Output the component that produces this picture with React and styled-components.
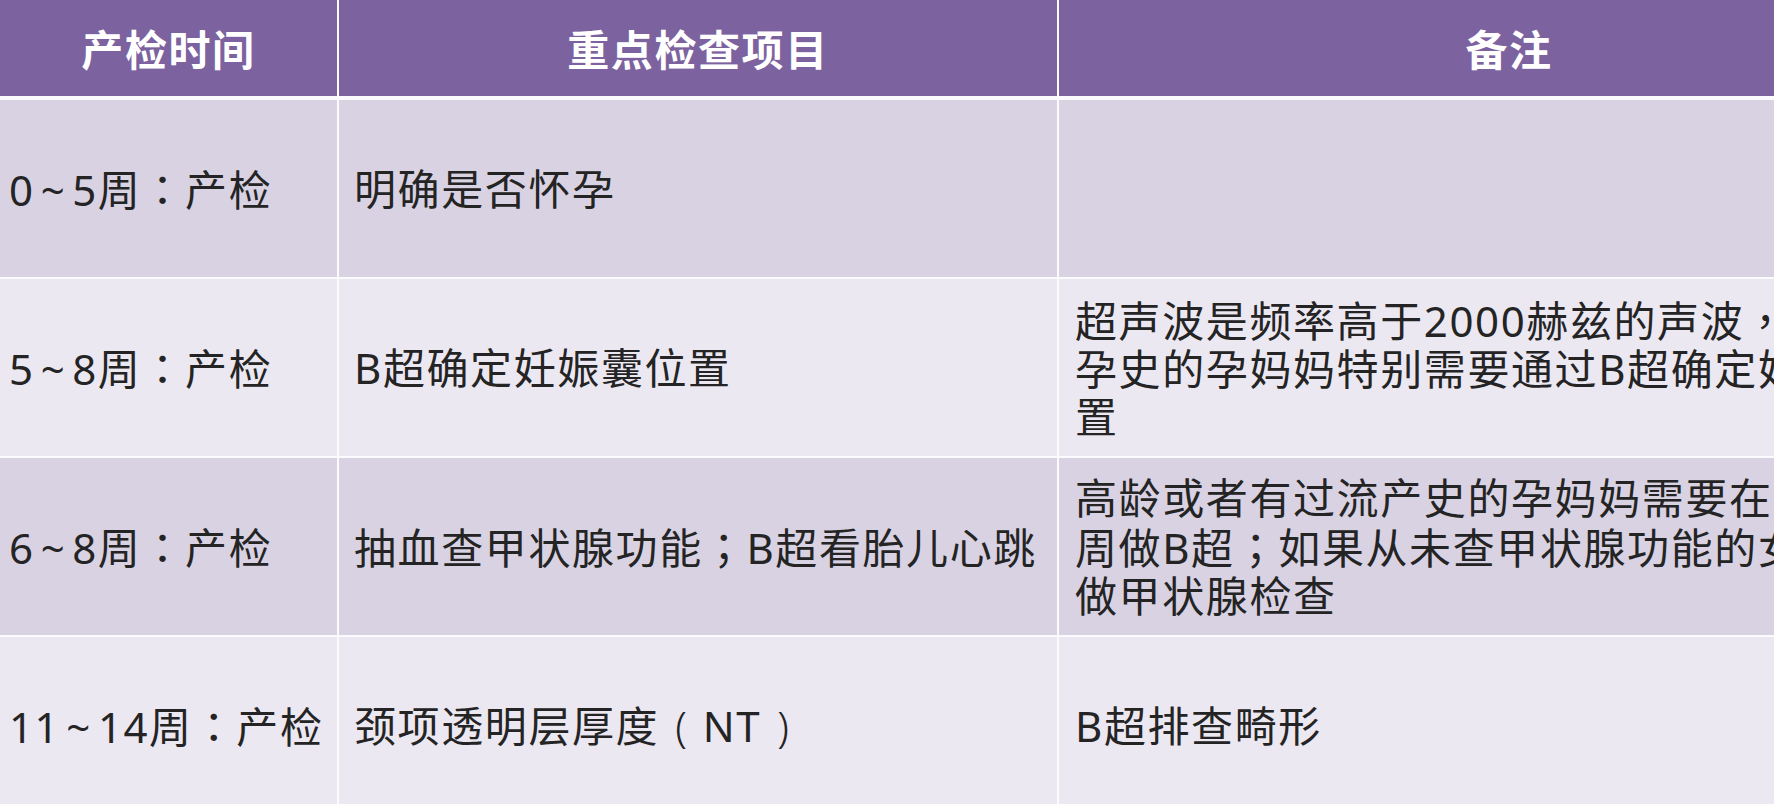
import React from "react";
import styled, { createGlobalStyle } from "styled-components";

const GlobalStyle = createGlobalStyle`
  html, body {
    margin: 0;
    padding: 0;
    background: #ffffff;
  }
  body {
    font-family: "Noto Sans", "Noto Sans CJK SC", sans-serif;
  }
`;

const rows = [
  { time: "0~5周：产检", item: "明确是否怀孕", note: [] },
  {
    time: "5~8周：产检",
    item: "B超确定妊娠囊位置",
    note: [
      "超声波是频率高于2000赫兹的声波，有宫外",
      "孕史的孕妈妈特别需要通过B超确定妊娠囊位",
      "置",
    ],
  },
  {
    time: "6~8周：产检",
    item: "抽血查甲状腺功能；B超看胎儿心跳",
    note: [
      "高龄或者有过流产史的孕妈妈需要在6~8",
      "周做B超；如果从未查甲状腺功能的女性，要",
      "做甲状腺检查",
    ],
  },
  { time: "11~14周：产检", item: "颈项透明层厚度（NT）", note: ["B超排查畸形"] },
];

const Page = styled.div`
  width: 1774px;
  height: 804px;
  overflow: hidden;
  background: #fbfafd;
`;

const Table = styled.div`
  display: grid;
  width: 1959px;
  grid-template-columns: 337px 718px 900px;
  grid-template-rows: 98px repeat(4, 177px);
  column-gap: 2px;
  row-gap: 2px;
  background: #fbfafd;
  font-size: 42px;
  letter-spacing: 1.6px;
`;

const HeadCell = styled.div`
  display: flex;
  align-items: center;
  justify-content: center;
  box-sizing: border-box;
  height: 98px;
  padding-bottom: 2px;
  border-bottom: 2px solid #fbfafd;
  background: #7d62a0;
  color: #ffffff;
  font-weight: 700;
`;

const Cell = styled.div`
  display: flex;
  flex-direction: column;
  justify-content: center;
  box-sizing: border-box;
  padding-left: ${(p) => p.$pad}px;
  background: ${(p) => (p.$odd ? "#d8d2e3" : "#ece8f2")};
  color: #242424;
  line-height: 48px;
  white-space: nowrap;
`;

const Line = styled.span`
  display: block;
`;

/* full-width punctuation sits centred in its box, as in the slide */
const Punct = styled.span`
  font-family: "Noto Sans CJK TC", sans-serif;
`;

const Paren = styled.span`
  display: inline-block;
  width: calc(1em + 1.6px);
  text-align: center;
  letter-spacing: 0;
  font-weight: 300;
`;

const Tilde = styled.span`
  padding: 0 6px;
`;

const parens = { "（": "(", "）": ")" };

function rich(text) {
  return text.split(/([：；，（）~])/).map((part, i) => {
    if (parens[part]) return <Paren key={i}>{parens[part]}</Paren>;
    if (part === "~") return <Tilde key={i}>~</Tilde>;
    if (/^[：；，]$/.test(part)) return <Punct key={i}>{part}</Punct>;
    return part;
  });
}

export default function App() {
  return (
    <>
      <GlobalStyle />
      <Page>
        <Table>
          <HeadCell>产检时间</HeadCell>
          <HeadCell>重点检查项目</HeadCell>
          <HeadCell>备注</HeadCell>
          {rows.map((r, i) => (
            <React.Fragment key={r.time}>
              <Cell $odd={i % 2 === 0} $pad={9}>
                <Line>{rich(r.time)}</Line>
              </Cell>
              <Cell $odd={i % 2 === 0} $pad={15}>
                <Line>{rich(r.item)}</Line>
              </Cell>
              <Cell $odd={i % 2 === 0} $pad={16}>
                {r.note.map((line) => (
                  <Line key={line}>{rich(line)}</Line>
                ))}
              </Cell>
            </React.Fragment>
          ))}
        </Table>
      </Page>
    </>
  );
}
